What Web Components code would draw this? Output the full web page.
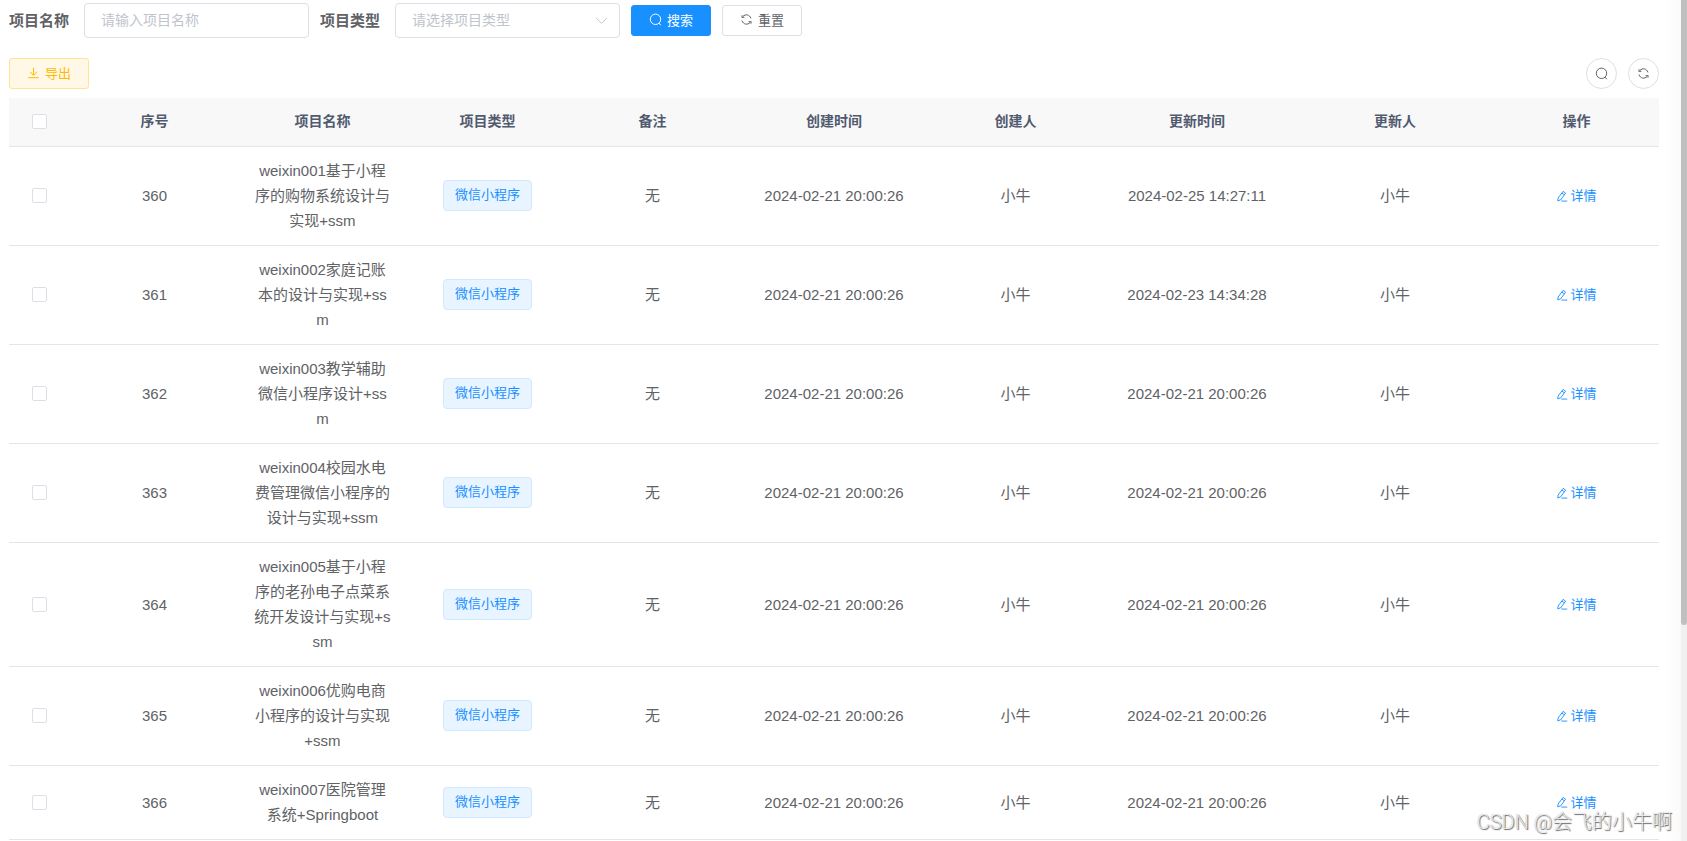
<!DOCTYPE html>
<html lang="zh-CN">
<head>
<meta charset="utf-8">
<title>项目管理</title>
<style>
    html, body {
        margin: 0;
        height: 100%;
    }
    body {
        font-family: "Liberation Sans", "Noto Sans CJK SC", sans-serif;
        font-size: 15px;
        color: #606266;
        background: #fff;
    }
</style>
</head>
<body>
<project-page></project-page>

<template id="template-ui-icon">
    <style>
        :host {
            display: inline-flex;
            flex: none;
            width: 13px;
            height: 13px;
        }
        svg {
            width: 100%;
            height: 100%;
            fill: none;
            stroke: currentColor;
            stroke-width: 1;
        }
    </style>
    <svg viewBox="0 0 13 13" aria-hidden="true"></svg>
</template>

<template id="template-ui-button">
    <style>
        :host {
            display: inline-flex;
        }
        button {
            display: flex;
            align-items: center;
            justify-content: center;
            gap: 5px;
            box-sizing: border-box;
            width: 80px;
            height: 31px;
            padding: 0 0 2px;
            border: 1px solid #dcdfe6;
            border-radius: 3px;
            background: #fff;
            color: #606266;
            font: inherit;
            font-size: 13px;
            cursor: pointer;
        }
        :host([type=primary]) button {
            border-color: #1890ff;
            background: #1890ff;
            color: #fff;
        }
        :host([type=warning]) button {
            border-color: #ffe399;
            background: #fff8e6;
            color: #ffba00;
        }
        :host([circle]) button {
            width: 31px;
            padding: 0;
            border-radius: 50%;
        }
    </style>
    <button type="button"><ui-icon></ui-icon><slot></slot></button>
</template>

<template id="template-ui-tag">
    <style>
        :host {
            display: inline-block;
            box-sizing: border-box;
            height: 31px;
            padding: 0 11px;
            border: 1px solid #d1e9ff;
            border-radius: 4px;
            background: #e8f4ff;
            color: #1890ff;
            font-size: 13px;
            line-height: 28px;
            white-space: nowrap;
            vertical-align: middle;
        }
    </style>
    <slot></slot>
</template>

<template id="template-search-form">
    <style>
        :host {
            display: block;
        }
        form {
            display: flex;
            flex-wrap: wrap;
            align-items: center;
            gap: 11px;
        }
        .item {
            display: flex;
            align-items: center;
        }
        label {
            width: 75px;
            padding-bottom: 2px;
            font-weight: 700;
        }
        .field {
            display: grid;
            align-items: center;
            width: 225px;
        }
        .field > * {
            grid-area: 1 / 1;
        }
        input, select {
            box-sizing: border-box;
            width: 100%;
            height: 35px;
            margin: 0;
            padding: 0 16px 2px;
            border: 1px solid #dcdfe6;
            border-radius: 4px;
            background: #fff;
            color: #606266;
            font: inherit;
            font-size: 14px;
            appearance: none;
        }
        select:invalid, input::placeholder {
            color: #c0c4cc;
            opacity: 1;
        }
        ui-icon {
            justify-self: end;
            margin-right: 12px;
            color: #c0c4cc;
            pointer-events: none;
        }
    </style>
    <form>
        <div class="item">
            <label for="name">项目名称</label>
            <div class="field"><input id="name" type="text" placeholder="请输入项目名称"></div>
        </div>
        <div class="item">
            <label for="type">项目类型</label>
            <div class="field">
                <select id="type" required>
                    <option value="" selected>请选择项目类型</option>
                    <option value="1">微信小程序</option>
                </select>
                <ui-icon name="arrow"></ui-icon>
            </div>
        </div>
        <ui-button type="primary" icon="search">搜索</ui-button>
        <ui-button icon="refresh">重置</ui-button>
    </form>
</template>

<template id="template-project-table">
    <style>
        :host {
            display: block;
        }
        table {
            width: 100%;
            border-collapse: separate;
            border-spacing: 0;
            table-layout: fixed;
        }
        .check { width: 60px; }
        .normal { width: 10%; }
        .wide { width: 12%; }
        th, td {
            padding: 11px 13px 12px;
            border-bottom: 1px solid #dfe6ec;
            line-height: 25px;
            text-align: center;
            word-break: break-all;
        }
        th {
            background: #f8f8f9;
            color: #515a6e;
            font-size: 14px;
            font-weight: 700;
        }
        input {
            display: block;
            width: 15px;
            height: 15px;
            margin: 0 auto;
            border: 1px solid #dcdfe6;
            border-radius: 2px;
            background: #fff;
            appearance: none;
        }
        a {
            display: flex;
            align-items: center;
            justify-content: center;
            gap: 2px;
            color: #1890ff;
            font-size: 13px;
            text-decoration: none;
        }
        a ui-icon {
            width: 12px;
            height: 12px;
        }
    </style>
    <table>
        <colgroup>
            <col class="check"><col>
            <col class="normal"><col class="normal"><col class="normal">
            <col class="wide"><col class="normal"><col class="wide"><col class="wide">
            <col class="normal">
        </colgroup>
        <thead>
            <tr>
                <th><input type="checkbox" aria-label="全选"></th>
                <th>序号</th>
                <th>项目名称</th>
                <th>项目类型</th>
                <th>备注</th>
                <th>创建时间</th>
                <th>创建人</th>
                <th>更新时间</th>
                <th>更新人</th>
                <th>操作</th>
            </tr>
        </thead>
        <tbody></tbody>
    </table>
</template>

<template id="template-scroll-bar">
    <style>
        :host {
            display: block;
            width: 6px;
            background: #f1f1f1;
        }
        .thumb {
            height: 74.3%;
            border-radius: 0 0 3px 3px;
            background: #c0c0c0;
        }
    </style>
    <div class="thumb"></div>
</template>

<template id="template-water-mark">
    <style>
        :host {
            position: absolute;
            right: 15px;
            bottom: 4px;
            color: rgba(255, 255, 255, .8);
            font-family: Roboto, "Noto Sans CJK SC", sans-serif;
            font-size: 20px;
            font-weight: 300;
            line-height: 30px;
            text-shadow: 1px 1px 1px #666, 0 0 1px #aaa;
            pointer-events: none;
        }
    </style>
    <slot></slot>
</template>

<template id="template-project-page">
    <style>
        :host {
            position: relative;
            display: flex;
            min-height: 100%;
            overflow: hidden;
        }
        main {
            flex: 1;
            min-width: 0;
            padding: 3px 0 0 9px;
        }
        .toolbar {
            display: flex;
            align-items: center;
            gap: 11px;
            margin: 20px 0 9px;
        }
        .space {
            flex: 1;
        }
        .shade {
            width: 22px;
            background: linear-gradient(to right, #fff 30%, #f9f9f9);
        }
    </style>
    <main>
        <search-form></search-form>
        <div class="toolbar">
            <ui-button type="warning" icon="download">导出</ui-button>
            <span class="space"></span>
            <ui-button circle icon="search" label="显示搜索"></ui-button>
            <ui-button circle icon="refresh" label="刷新"></ui-button>
        </div>
        <project-table></project-table>
    </main>
    <div class="shade"></div>
    <scroll-bar></scroll-bar>
    <water-mark>CSDN @会飞的小牛啊</water-mark>
</template>

<script>
    (function (owner) {
        const icons = {
            search: '<circle cx="6.5" cy="6.3" r="5.2"/><path d="M9.8 10l2 2.2"/>',
            refresh: '<path d="M2 4.8V2.3M2 4.3h2.4M3 3.4C5.4.9 9.6 1.3 11 5.4M11 8.2v2.5M11 8.7H8.6M10 9.6C7.6 12.1 3.4 11.7 2 7.6"/>',
            download: '<path d="M6.5 1.7v7.5M3 5.8l3.5 3.5L10 5.8M1.2 11.7h10.6"/>',
            arrow: '<path d="M1.2 4l5.3 5.3L11.8 4"/>',
            edit: '<path d="M7.7 1.5l2.7 1.9-5.3 7.2-3.2 1.2.4-3.1zM6.4 3.3l2.6 1.9M5.8 12h6.4"/>'
        }

        const projects = [
            [360, 'weixin001基于小程序的购物系统设计与实现+ssm', '2024-02-25 14:27:11'],
            [361, 'weixin002家庭记账本的设计与实现+ssm', '2024-02-23 14:34:28'],
            [362, 'weixin003教学辅助微信小程序设计+ssm', '2024-02-21 20:00:26'],
            [363, 'weixin004校园水电费管理微信小程序的设计与实现+ssm', '2024-02-21 20:00:26'],
            [364, 'weixin005基于小程序的老孙电子点菜系统开发设计与实现+ssm', '2024-02-21 20:00:26'],
            [365, 'weixin006优购电商小程序的设计与实现+ssm', '2024-02-21 20:00:26'],
            [366, 'weixin007医院管理系统+Springboot', '2024-02-21 20:00:26']
        ]

        // attaches an open shadow root filled from #template-<tag name>
        class TemplateElement extends HTMLElement {
            constructor() {
                super()
                const template = owner.querySelector('#template-' + this.localName).content
                this.attachShadow({ mode: 'open' }).appendChild(template.cloneNode(true))
            }
        }

        class UiIcon extends TemplateElement {
            static get observedAttributes() {
                return ['name']
            }
            attributeChangedCallback(attrName, oldVal, newVal) {
                this.shadowRoot.querySelector('svg').innerHTML = icons[newVal] || ''
            }
        }

        class UiButton extends TemplateElement {
            connectedCallback() {
                this.shadowRoot.querySelector('ui-icon').setAttribute('name', this.getAttribute('icon'))
                if (this.hasAttribute('label')) {
                    this.shadowRoot.querySelector('button').setAttribute('aria-label', this.getAttribute('label'))
                }
            }
        }

        class ProjectTable extends TemplateElement {
            connectedCallback() {
                this.shadowRoot.querySelector('tbody').innerHTML = projects.map(([id, name, updated]) => `
                    <tr>
                        <td><input type="checkbox" aria-label="选择 ${id}"></td>
                        <td>${id}</td>
                        <td>${name}</td>
                        <td><ui-tag>微信小程序</ui-tag></td>
                        <td>无</td>
                        <td>2024-02-21 20:00:26</td>
                        <td>小牛</td>
                        <td>${updated}</td>
                        <td>小牛</td>
                        <td><a href="#${id}"><ui-icon name="edit"></ui-icon>详情</a></td>
                    </tr>`).join('')
            }
        }

        customElements.define('ui-icon', UiIcon)
        customElements.define('ui-button', UiButton)
        customElements.define('ui-tag', class extends TemplateElement {})
        customElements.define('search-form', class extends TemplateElement {})
        customElements.define('project-table', ProjectTable)
        customElements.define('scroll-bar', class extends TemplateElement {})
        customElements.define('water-mark', class extends TemplateElement {})
        customElements.define('project-page', class extends TemplateElement {})
    })(document)
</script>
</body>
</html>
